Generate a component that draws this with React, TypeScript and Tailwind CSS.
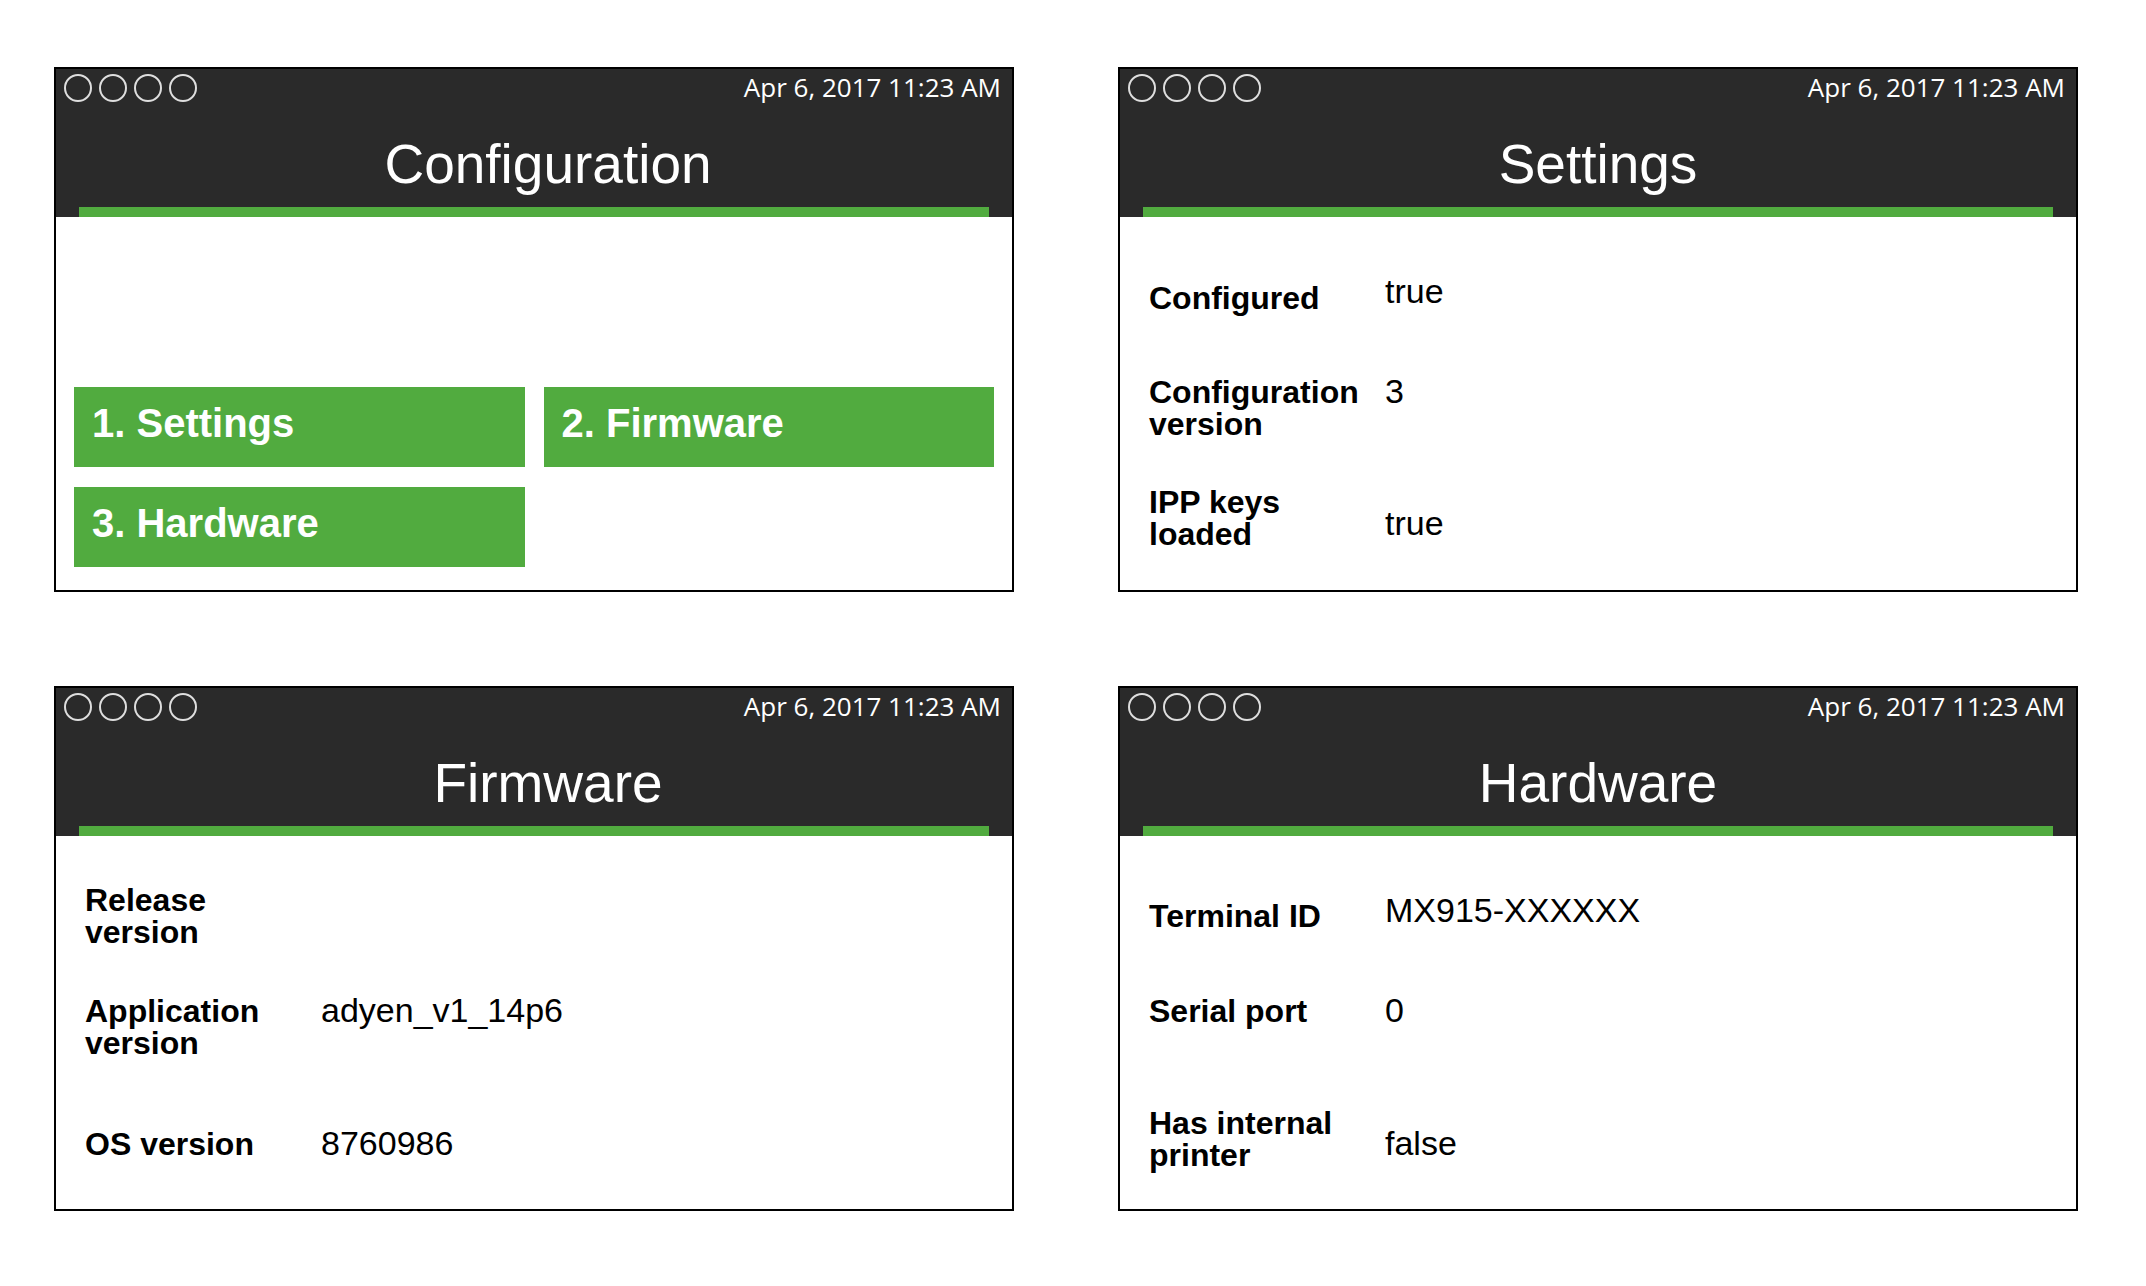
import React from "react";

type Row = {
  label: string;
  value: string;
  rowClass: string;
  labelClass: string;
  valueClass: string;
};

function Header({ title, shift }: { title: string; shift: boolean }) {
  return (
    <div className="flex h-[148px] flex-col bg-[#2a2a2a]">
      <div className="flex items-start justify-between pl-[8px] pr-[11px] pt-[4px]">
        <div className="mt-[1px] flex gap-[7px]">
          <div className="h-[28px] w-[28px] rounded-full border-2 border-[#dedede]" />
          <div className="h-[28px] w-[28px] rounded-full border-2 border-[#dedede]" />
          <div className="h-[28px] w-[28px] rounded-full border-2 border-[#dedede]" />
          <div className="h-[28px] w-[28px] rounded-full border-2 border-[#dedede]" />
        </div>
        <div className="font-['Open_Sans',sans-serif] text-[26px] leading-[28px] text-white">
          Apr 6, 2017 11:23 AM
        </div>
      </div>
      <div
        className={
          shift
            ? "mt-[35px] pl-[28px] text-center text-[55px] leading-[55px] text-white"
            : "mt-[35px] text-center text-[55px] leading-[55px] text-white"
        }
      >
        {title}
      </div>
      <div className="mx-[23px] mt-auto h-[10px] bg-[#51ab3f]" />
    </div>
  );
}

function Panel({
  title,
  shift,
  children,
}: {
  title: string;
  shift: boolean;
  children: React.ReactNode;
}) {
  return (
    <div className="flex h-[525px] w-[960px] flex-col border-2 border-black bg-white">
      <Header title={title} shift={shift} />
      <div className="flex-1">{children}</div>
    </div>
  );
}

function InfoBody({ pt, rows }: { pt: string; rows: Row[] }) {
  return (
    <div className={pt + " flex flex-col pl-[29px]"}>
      {rows.map((r, i) => (
        <div key={i} className={r.rowClass + " flex items-start"}>
          <div
            className={
              r.labelClass +
              " w-[236px] pr-[8px] text-[32px] font-bold leading-[32px] text-black"
            }
          >
            {r.label}
          </div>
          <div className={r.valueClass + " text-[34px] leading-[34px] text-black"}>
            {r.value}
          </div>
        </div>
      ))}
    </div>
  );
}

function MenuButton({ label }: { label: string }) {
  return (
    <div className="h-[80px] bg-[#51ab3f] pl-[18px] pt-[16px] text-[40px] font-bold leading-[40px] text-white">
      {label}
    </div>
  );
}

export default function App() {
  const settingsRows: Row[] = [
    { label: "Configured", value: "true", rowClass: "", labelClass: "mt-[8px]", valueClass: "" },
    {
      label: "Configuration version",
      value: "3",
      rowClass: "mt-[60px]",
      labelClass: "mt-[2px]",
      valueClass: "",
    },
    {
      label: "IPP keys loaded",
      value: "true",
      rowClass: "mt-[46px]",
      labelClass: "",
      valueClass: "mt-[20px]",
    },
  ];
  const firmwareRows: Row[] = [
    { label: "Release version", value: "", rowClass: "", labelClass: "", valueClass: "" },
    {
      label: "Application version",
      value: "adyen_v1_14p6",
      rowClass: "mt-[45px]",
      labelClass: "mt-[2px]",
      valueClass: "",
    },
    {
      label: "OS version",
      value: "8760986",
      rowClass: "mt-[67px]",
      labelClass: "mt-[2px]",
      valueClass: "",
    },
  ];
  const hardwareRows: Row[] = [
    {
      label: "Terminal ID",
      value: "MX915-XXXXXX",
      rowClass: "",
      labelClass: "mt-[7px]",
      valueClass: "",
    },
    {
      label: "Serial port",
      value: "0",
      rowClass: "mt-[61px]",
      labelClass: "mt-[2px]",
      valueClass: "",
    },
    {
      label: "Has internal printer",
      value: "false",
      rowClass: "mt-[80px]",
      labelClass: "",
      valueClass: "mt-[19px]",
    },
  ];

  return (
    <div className="min-h-[1286px] w-[2146px] bg-white pl-[54px] pt-[67px] font-['Liberation_Sans',Arial,sans-serif]">
      <div className="grid grid-cols-[960px_960px] gap-x-[104px] gap-y-[94px]">
        <Panel title="Configuration" shift={true}>
          <div className="grid grid-cols-2 gap-x-[19px] gap-y-[20px] px-[18px] pt-[170px]">
            <MenuButton label="1. Settings" />
            <MenuButton label="2. Firmware" />
            <MenuButton label="3. Hardware" />
          </div>
        </Panel>
        <Panel title="Settings" shift={false}>
          <InfoBody pt="pt-[57px]" rows={settingsRows} />
        </Panel>
        <Panel title="Firmware" shift={true}>
          <InfoBody pt="pt-[48px]" rows={firmwareRows} />
        </Panel>
        <Panel title="Hardware" shift={false}>
          <InfoBody pt="pt-[57px]" rows={hardwareRows} />
        </Panel>
      </div>
    </div>
  );
}
